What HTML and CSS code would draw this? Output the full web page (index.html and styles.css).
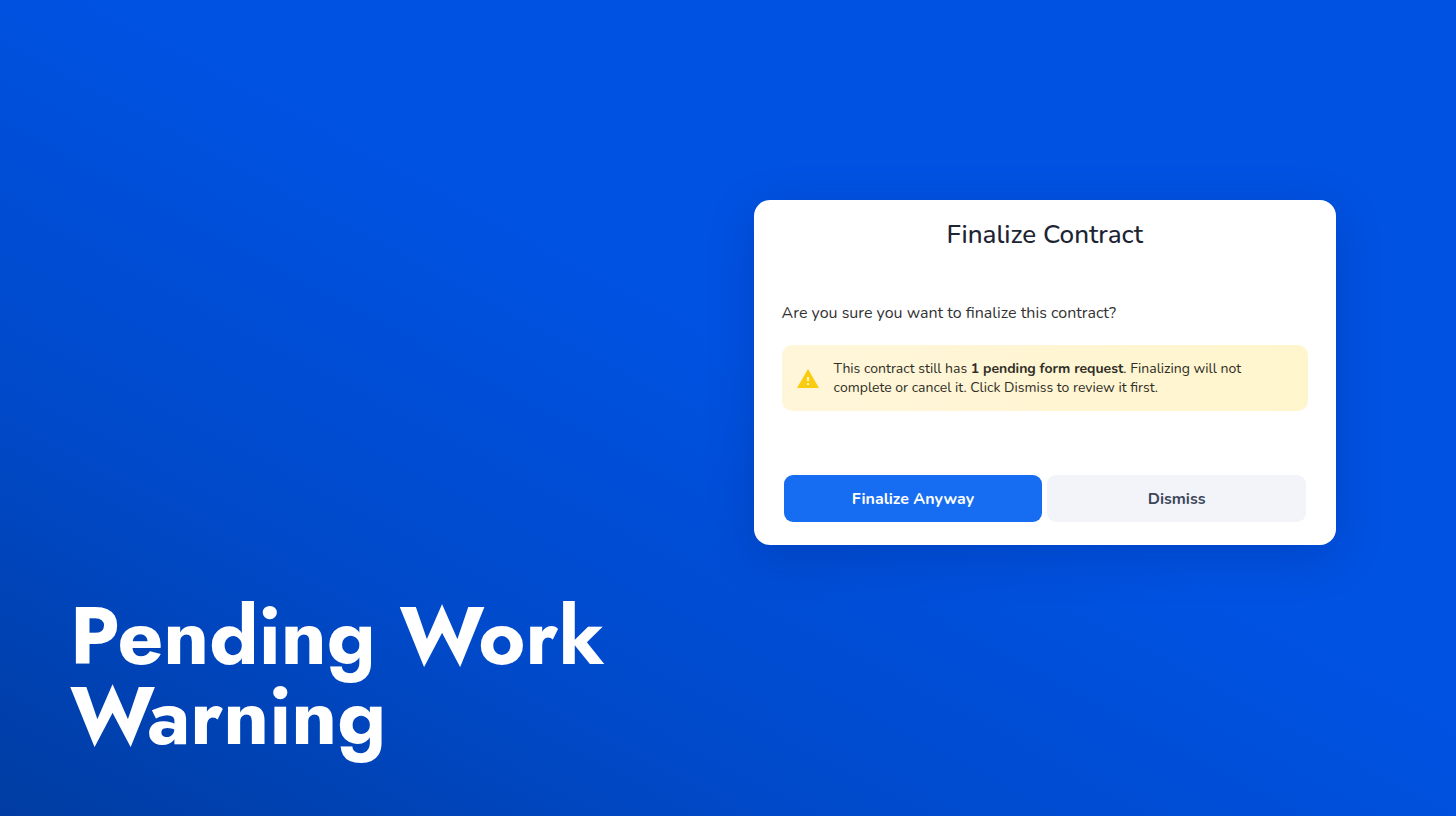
FILE: index.html
```html
<!DOCTYPE html>
<html lang="en">
<head>
    <meta charset="UTF-8">
    <meta name="viewport" content="width=device-width, initial-scale=1.0">
    <title>Pending Work Warning</title>
    <link rel="stylesheet" href="styles.css">
</head>
<body>
    <main class="slide">
        <h1 class="headline">Pending Work Warning</h1>
        <section class="dialog" role="dialog" aria-labelledby="dialog-title">
            <h2 id="dialog-title">Finalize Contract</h2>
            <p class="question">Are you sure you want to finalize this contract?</p>
            <div class="warning">
                <svg class="warning-icon" viewBox="1 2 22 19" aria-hidden="true">
                    <path fill="#f9cc10" d="M1 21h22L12 2 1 21z"/>
                    <path fill="#fff6d4" d="M13 18h-2v-2h2v2zm0-4h-2v-4h2v4z"/>
                </svg>
                <p>This contract still has <strong>1 pending form request</strong>. Finalizing will not complete or cancel it. Click Dismiss to review it first.</p>
            </div>
            <div class="actions">
                <button class="btn primary" type="button">Finalize Anyway</button>
                <button class="btn" type="button">Dismiss</button>
            </div>
        </section>
    </main>
</body>
</html>
```
FILE: styles.css
```css
*{
    box-sizing: border-box;
}

body{
    margin: 0;
    font-family: Nunito, Lato, sans-serif;
}

.slide{
    display: flex;
    justify-content: space-between;
    min-height: 100vh;
    padding: 0 120px 0 70px;
    background: linear-gradient(28deg, #003ca2 0%, #004acb 28%, #0052e2 55%);
}

.headline{
    align-self: flex-end;
    width: 45%;
    margin: 0 0 60px;
    color: #fff;
    font-family: Jost, Lato, sans-serif;
    font-size: 80px;
    font-weight: 700;
    line-height: 80px;
}

.dialog{
    align-self: flex-start;
    width: 40vw;
    margin-top: 200px;
    padding: 17px 28px 23px;
    border-radius: 16px;
    background-color: #fff;
    box-shadow: 0 12px 48px rgba(0, 20, 80, 0.2);
}

.dialog h2{
    margin: 0 0 48px;
    color: #1d2433;
    font-size: 26px;
    font-weight: 500;
    line-height: 36px;
    text-align: center;
}

.question{
    margin: 0 0 20px;
    color: #333;
    font-size: 16px;
    line-height: 24px;
}

.warning{
    display: flex;
    align-items: center;
    gap: 15px;
    padding: 14px 15px;
    border-radius: 10px;
    background: linear-gradient(90deg, #fff6da, #fff5cd);
}

.warning-icon{
    flex: none;
    width: 22px;
    height: 19px;
}

.warning p{
    margin: 0;
    color: #302e26;
    font-size: 14px;
    line-height: 19px;
}

.actions{
    display: flex;
    gap: 5px;
    margin-top: 64px;
    padding: 0 2px;
}

.btn{
    flex: 1;
    height: 47px;
    border: none;
    border-radius: 9px;
    background-color: #f3f4f9;
    color: #3c4759;
    font-family: inherit;
    font-size: 16px;
    font-weight: 700;
}

.primary{
    background-color: #176df1;
    color: #fff;
}
```
